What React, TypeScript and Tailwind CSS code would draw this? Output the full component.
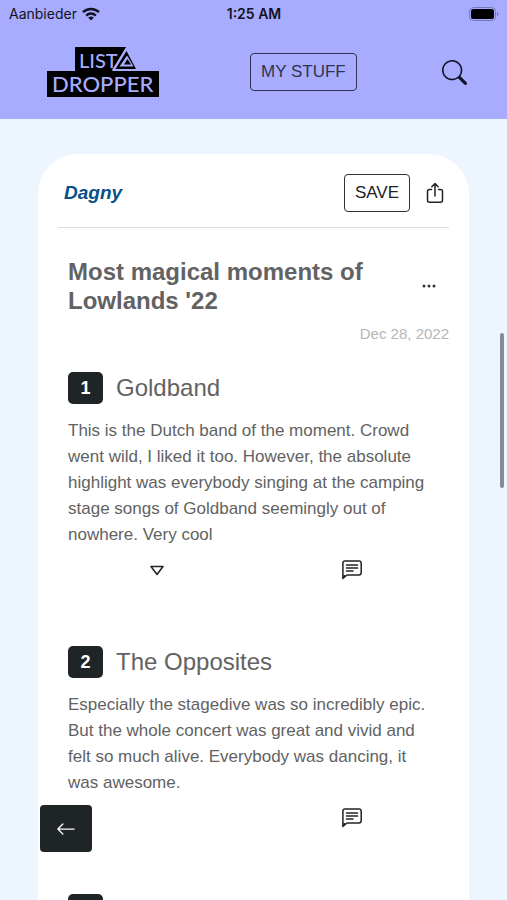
import { FC } from 'react'
import { BsArrowLeft, BsSearch, BsThreeDots } from 'react-icons/bs'

interface Item {
    rank: number;
    title: string;
    text: string;
    hasMore?: boolean;
}

const ITEMS: Item[] = [
    {
        rank: 1,
        title: 'Goldband',
        text: 'This is the Dutch band of the moment. Crowd went wild, I liked it too. However, the absolute highlight was everybody singing at the camping stage songs of Goldband seemingly out of nowhere. Very cool',
        hasMore: true,
    },
    {
        rank: 2,
        title: 'The Opposites',
        text: 'Especially the stagedive was so incredibly epic. But the whole concert was great and vivid and felt so much alive. Everybody was dancing, it was awesome.',
    },
];

const StatusBar: FC = () => (
    <div className="grid grid-cols-3 items-center h-7 pl-[9px] pr-2 font-[Inter,sans-serif]">
        <div className="flex gap-[5px] items-center text-sm">
            <span>Aanbieder</span>
            <svg viewBox="0 0 18 14" className="w-[18px] h-[14px]" fill="none" stroke="currentColor" strokeWidth="2.5">
                <path d="M1 5.2a11.4 11.4 0 0 1 16 0" />
                <path d="M4.2 8.6a6.8 6.8 0 0 1 9.6 0" />
                <path d="M9 13.6 6.2 10.8a4 4 0 0 1 5.6 0z" fill="currentColor" stroke="none" />
            </svg>
        </div>
        <span className="text-sm font-semibold text-center">1:25 AM</span>
        <svg viewBox="0 0 30 14" className="justify-self-end w-[30px] h-[14px]">
            <rect x="0.5" y="0.5" width="26" height="13" rx="4" fill="none" stroke="#7678b8" />
            <rect x="2" y="2" width="23" height="10" rx="2.5" fill="#000" />
            <path d="M28 5c2 .6 2 3.4 0 4z" fill="#7678b8" />
        </svg>
    </div>
);

const Logo: FC = () => (
    <a href="#" aria-label="Listdropper">
        <svg viewBox="0 0 112 52" className="w-[112px] h-[52px]">
            <path d="M28 1h51L65 25h47v26H0V25h28z" fill="#000" />
            <text x="32" y="22" fontSize="20" fill="#a8acff" fontFamily="Lato, sans-serif" fontWeight="500">LIST</text>
            <text x="5" y="46" fontSize="22" fill="#a8acff" fontFamily="Lato, sans-serif" fontWeight="500">DROPPER</text>
            <path d="M79.500 1 90 24H65z" fill="#a8acff" />
            <path d="M79.500 5 89 23H68.500z" fill="#000" />
            <path d="M80 9.500 86.500 20.500H72.500z" fill="#a8acff" />
            <path d="M80.500 13 84 18.500H77z" fill="#000" />
        </svg>
    </a>
);

const ShareIcon: FC = () => (
    <svg viewBox="0 0 18 22" className="w-[18px] h-[22px]" fill="none" stroke="currentColor" strokeWidth="1.5" strokeLinecap="round" strokeLinejoin="round">
        <path d="M5.500 7.500H3.500c-1.200 0-2 .8-2 2v8.800c0 1.200.8 2 2 2h11c1.200 0 2-.8 2-2V9.500c0-1.200-.8-2-2-2h-2" />
        <path d="M9 14V1.800M5.800 4.700 9 1.600l3.200 3.100" />
    </svg>
);

const CommentIcon: FC = () => (
    <svg viewBox="0 0 20 20" className="w-5 h-5" fill="none" stroke="currentColor" strokeWidth="1.5" strokeLinecap="round" strokeLinejoin="round">
        <path d="M.9 18.500V3.200C.9 1.900 1.700 1 3 1h14c1.300 0 2.200.9 2.200 2.200v9.600c0 1.300-.9 2.200-2.200 2.200H5L.9 18.500l1.600-2.800" />
        <path d="M4.500 5h11M4.500 8h11M4.500 11h6.500" />
    </svg>
);

const Badge: FC<{ rank?: number }> = ({ rank }) => (
    <span className="grid place-items-center w-[35px] h-8 text-lg font-bold text-white rounded-[5px] bg-[#1f2427]">{rank}</span>
);

const ListItem: FC<{ item: Item }> = ({ item }) => (
    <li className="mb-16">
        <div className="flex gap-[13px] items-center">
            <Badge rank={item.rank} />
            <h2 className="text-2xl leading-8">{item.title}</h2>
        </div>
        <p className="mt-[14px] text-[17px] leading-[26px]">{item.text}</p>
        <div className="grid grid-cols-2 items-center -mx-2 mt-[10px] h-6 text-[#1f2427]">
            <div className="flex justify-center">
                {item.hasMore && (
                    <button aria-label="Show more">
                        <svg viewBox="0 0 14 11" className="w-[14px] h-[11px]" fill="none" stroke="currentColor" strokeWidth="1.500" strokeLinejoin="round">
                            <path d="M1 1.500h12L7 9.500z" />
                        </svg>
                    </button>
                )}
            </div>
            <div className="flex justify-center">
                <button aria-label="Comments"><CommentIcon /></button>
            </div>
        </div>
    </li>
);

const App: FC = () => {
    return (
        <div className="relative h-screen overflow-hidden bg-[#edf6ff] font-['Liberation_Sans',Arial,sans-serif]">
            <header className="pb-[21px] text-[#111322] bg-[#a8acff]">
                <StatusBar />
                <div className="flex items-center pt-[18px] pr-10 pl-[47px]">
                    <Logo />
                    <button className="px-[10px] ml-[91px] h-[38px] text-[17px] text-[#30334e] rounded border border-[#30334e]">MY STUFF</button>
                    <button aria-label="Search" className="ml-auto"><BsSearch className="w-[25px] h-[25px]" /></button>
                </div>
            </header>

            <main className="mx-[38px] mt-[35px] px-5 min-h-screen bg-white rounded-[40px] text-[#626262]">
                <div className="flex items-center pt-5 pb-[15px] pl-[6px] border-b border-[#dcdcdc]">
                    <a href="#" className="text-[19px] italic font-bold text-[#07508a]">Dagny</a>
                    <button className="px-[10px] ml-auto h-[38px] text-[17px] text-[#222] rounded border border-[#333]">SAVE</button>
                    <button aria-label="Share" className="mr-[5px] ml-4 text-[#222]"><ShareIcon /></button>
                </div>

                <div className="flex justify-between items-center pt-[29px] pr-3 pl-[10px]">
                    <h1 className="text-2xl font-bold leading-[29px] w-[310px]">Most magical moments of Lowlands '22</h1>
                    <button aria-label="More options" className="text-[#333]"><BsThreeDots className="w-4 h-4" /></button>
                </div>
                <p className="mt-[9px] text-[15px] leading-5 text-right text-[#b3b6ba]">Dec 28, 2022</p>

                <ol className="pt-7 pr-2 pl-[10px]">
                    {ITEMS.map((item) => (
                        <ListItem key={item.rank} item={item} />
                    ))}
                    <li><Badge /></li>
                </ol>
            </main>

            {/* Floating back button */}
            <button aria-label="Back" className="grid absolute left-10 bottom-12 place-items-center w-[52px] h-[47px] text-white rounded bg-[#1f2427]">
                <BsArrowLeft className="w-5 h-5" />
            </button>
            {/* Scroll indicator */}
            <div className="absolute right-[3px] top-[333px] w-1 h-[155px] rounded-full bg-[#858c93]" />
        </div>
    );
};

export default App;
